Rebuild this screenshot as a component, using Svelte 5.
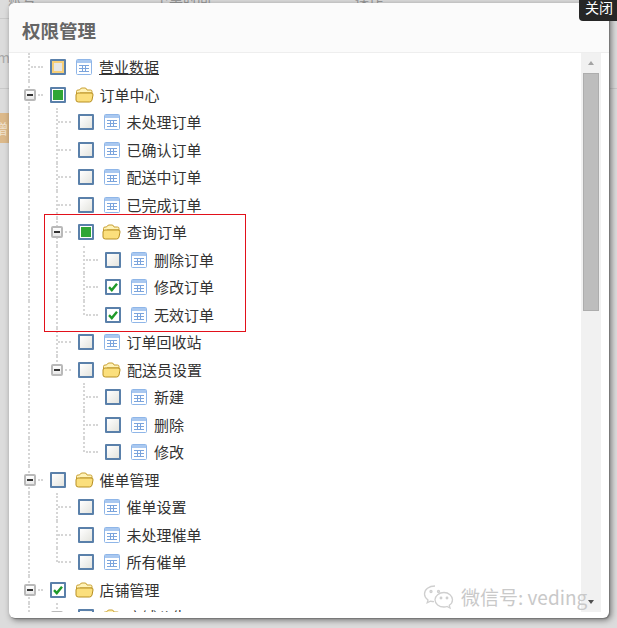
<script>
  const tree = [
    { name: "营业数据", state: "partial", link: true },
    {
      name: "订单中心",
      state: "full",
      children: [
        { name: "未处理订单" },
        { name: "已确认订单" },
        { name: "配送中订单" },
        { name: "已完成订单" },
        {
          name: "查询订单",
          state: "full",
          children: [
            { name: "删除订单" },
            { name: "修改订单", state: "checked" },
            { name: "无效订单", state: "checked" }
          ]
        },
        { name: "订单回收站" },
        {
          name: "配送员设置",
          children: [{ name: "新建" }, { name: "删除" }, { name: "修改" }]
        }
      ]
    },
    {
      name: "催单管理",
      children: [{ name: "催单设置" }, { name: "未处理催单" }, { name: "所有催单" }]
    },
    {
      name: "店铺管理",
      state: "checked",
      children: [{ name: "店铺公告", children: [] }]
    }
  ];

  // flatten the tree, keeping track of which guide lines carry on past each row
  function flatten(nodes, guides = []) {
    const rows = [];
    nodes.forEach((node, i) => {
      const last = guides.length > 0 && i === nodes.length - 1;
      rows.push({ ...node, guides, last });
      if (node.children) {
        rows.push(...flatten(node.children, [...guides, !last]));
      }
    });
    return rows;
  }

  const rows = flatten(tree);
</script>

<div class="page">
  <div class="backdrop">
    <span class="bgHead one">账号</span>
    <span class="bgHead two">下单时间</span>
    <span class="bgHead three">操作</span>
    <span class="bgCut">mi</span>
    <span class="bgButton">增</span>
  </div>

  <div class="modal">
    <div class="header">权限管理</div>
    <div class="body">
      <div class="tree">
        {#each rows as row}
          <div class="row">
            {#each row.guides as carry}
              <span class="cell" class:line={carry}></span>
            {/each}
            <span class="cell line branch" class:end={row.last}>
              {#if row.children}
                <span class="switch"><i></i></span>
              {/if}
            </span>
            <span class="box {row.state || 'empty'}">
              {#if row.state === "checked"}
                <svg width="12" height="12" viewBox="0 0 12 12">
                  <path d="M2 6.2l2.8 2.9L10 2.8" fill="none" stroke="#1f9a2a" stroke-width="2.4" />
                </svg>
              {/if}
            </span>
            {#if row.children}
              <svg class="folder" width="19" height="16" viewBox="0 0 19 16">
                <path d="M1.5 13V4.5Q1.5 3 3 3h1.5Q5.5 1 7 1h3q1.5 0 2 2h3.5q1.500 0 1.500 1.500V6H5z" fill="#fff3b8" stroke="#c9a032" />
                <path d="M1 8q0-2 2-2h13q2.500 0 2 2l-1 5q-.5 2-2.500 2H3.500Q1 15 1 13z" fill="#fbdf7c" stroke="#b78f22" />
              </svg>
            {:else}
              <svg class="doc" width="16" height="16" viewBox="0 0 16 16">
                <rect x=".5" y=".5" width="15" height="15" rx="1" fill="#fff" stroke="#8fb6e8" />
                <rect x="1" y="1" width="14" height="3" fill="#a9c8f0" />
                <path d="M3 6.500h10M3 9.500h10M3 12.500h10M6.500 6v7M9.500 6v7" fill="none" stroke="#7ba4dc" />
              </svg>
            {/if}
            <span class="label" class:link={row.link}>{row.name}</span>
          </div>
        {/each}
        <div class="highlight"></div>
      </div>
      <div class="scrollbar">
        <span class="arrow up"></span>
        <div class="thumb"></div>
        <span class="arrow down"></span>
      </div>
    </div>
    <div class="footer"></div>
  </div>

  <div class="closeTip">关闭</div>

  <div class="watermark">
    <svg width="31" height="26" viewBox="0 0 31 26" fill="none" stroke="#cfcfcf" stroke-width="1.300">
      <path d="M12 2C6 2 1.500 5.500 1.500 10c0 2.500 1.400 4.500 3.500 6l-.8 2.800 3.200-1.600c1.300.4 2.500.5 3.600.5" />
      <path d="M21 8.500c-5 0-9 3.300-9 7.300s4 7.200 9 7.200c1 0 2-.1 3-.5l3 1.500-.7-2.700c2-1.300 3.200-3.300 3.200-5.500 0-4-3.800-7.300-8.500-7.300z" />
      <circle cx="8" cy="7.500" r="1" />
      <circle cx="15.500" cy="7.500" r="1" />
      <circle cx="18" cy="14" r=".8" />
      <circle cx="24" cy="14" r=".8" />
    </svg>
    <span>微信号: veding</span>
  </div>
</div>

<style>
  :global(body) {
    margin: 0;
    background: #dcdcdc;
  }

  .page {
    position: relative;
    box-sizing: border-box;
    width: 617px;
    height: 628px;
    padding: 3px 8px 10px 9px;
    overflow: hidden;
    font-family: "Noto Sans CJK SC", "Liberation Sans", sans-serif;
    background: #dcdcdc;
  }

  .backdrop {
    position: absolute;
    inset: 0;
    color: #999;
    font-size: 14px;
  }

  .backdrop::before {
    content: "";
    position: absolute;
    left: 0;
    right: 0;
    top: 88px;
    border-top: 1px solid #c9c9c9;
  }

  .backdrop::after {
    content: "";
    position: absolute;
    left: 0;
    right: 0;
    top: 18px;
    border-top: 1px solid #c9c9c9;
  }

  .bgHead {
    position: absolute;
    top: -12px;
    line-height: 20px;
  }

  .one { left: 8px; }
  .two { left: 155px; }
  .three { left: 355px; }

  .bgCut {
    position: absolute;
    left: -3px;
    top: 47px;
    font-size: 14px;
    line-height: 20px;
    color: #aaa;
  }

  .bgButton {
    position: absolute;
    left: 0;
    top: 113px;
    width: 9px;
    height: 30px;
    overflow: hidden;
    background: #dcb98a;
    color: #f1e3cf;
    line-height: 30px;
    text-indent: -6px;
  }

  .modal {
    position: relative;
    display: flex;
    flex-direction: column;
    height: 100%;
    overflow: hidden;
    background: #fff;
    border-radius: 6px;
    box-shadow: 1px 1px 1px #777, 2px 2px 6px rgba(0, 0, 0, 0.5);
  }

  .header {
    flex: none;
    box-sizing: border-box;
    height: 50px;
    padding: 12px 13px 0;
    background: #fbfbfb;
    border-bottom: 1px solid #eee;
    color: #666;
    font-size: 18.500px;
    font-weight: 700;
    line-height: 30px;
  }

  .body {
    flex: 1;
    display: flex;
    min-height: 0;
    padding-right: 8px;
  }

  .tree {
    position: relative;
    flex: 1;
    min-width: 0;
    overflow: hidden;
    padding: 0.250px 0 0 6.500px;
  }

  .row {
    display: flex;
    align-items: center;
    height: 27.500px;
  }

  .cell {
    position: relative;
    flex: none;
    align-self: stretch;
    width: 27.500px;
  }

  .line::before {
    content: "";
    position: absolute;
    left: 12.500px;
    top: 0;
    bottom: 0;
    border-left: 2px dotted #d6d6d6;
  }

  .end::before {
    bottom: 50%;
  }

  .branch::after {
    content: "";
    position: absolute;
    left: 15px;
    right: 0;
    top: 50%;
    border-top: 2px dotted #d6d6d6;
    margin-top: -1px;
  }

  .switch {
    position: absolute;
    z-index: 1;
    left: 8px;
    top: 50%;
    box-sizing: border-box;
    width: 12px;
    height: 12px;
    margin-top: -6px;
    display: flex;
    align-items: center;
    justify-content: center;
    background: linear-gradient(#fff, #e8e8e8);
    border: 2px solid #b9b9b9;
    border-radius: 2px;
  }

  .switch i {
    width: 6px;
    height: 2px;
    background: #333;
  }

  .box {
    flex: none;
    box-sizing: border-box;
    display: flex;
    align-items: center;
    justify-content: center;
    width: 16px;
    height: 16px;
    margin-left: 7px;
    border: 2px solid #5a80aa;
    border-radius: 1px;
    background: #fff;
  }

  .empty {
    background: linear-gradient(135deg, #fff, #e4e4de);
  }

  .full {
    background: #2fa635;
    box-shadow: inset 0 0 0 1px #fff;
  }

  .partial {
    background: #e6e6e6;
    box-shadow: inset 0 0 0 2px #f8cf78;
  }

  .doc {
    flex: none;
    margin-left: 10px;
  }

  .folder {
    flex: none;
    margin-left: 8.500px;
    margin-right: -1px;
  }

  .label {
    margin-left: 7px;
    color: #333;
    font-size: 15px;
    line-height: 20px;
    white-space: nowrap;
  }

  .link {
    text-decoration: underline;
  }

  .highlight {
    position: absolute;
    left: 35px;
    top: 161px;
    width: 200px;
    height: 116px;
    border: 1px solid #e2101a;
  }

  .scrollbar {
    flex: none;
    box-sizing: border-box;
    display: flex;
    flex-direction: column;
    width: 20px;
    padding: 20px 2px 0;
    background: #f1f1f1;
    position: relative;
  }

  .thumb {
    height: 238px;
    background: #bdbdbd;
    border: 1px solid #adadad;
    box-sizing: border-box;
  }

  .arrow {
    position: absolute;
    left: 6.500px;
    width: 0;
    height: 0;
    border-left: 3.500px solid transparent;
    border-right: 3.500px solid transparent;
  }

  .up {
    top: 8px;
    border-bottom: 4px solid #a3a3a3;
  }

  .down {
    bottom: 8px;
    border-top: 4px solid #505050;
  }

  .footer {
    flex: none;
    height: 6px;
  }

  .closeTip {
    position: absolute;
    top: 0;
    right: 0;
    box-sizing: border-box;
    width: 38px;
    height: 21px;
    padding-left: 6px;
    background: #262626;
    border-bottom-left-radius: 4px;
    color: #fff;
    font-size: 14px;
    line-height: 14px;
    white-space: nowrap;
    overflow: hidden;
  }

  .watermark {
    position: absolute;
    left: 423px;
    top: 584px;
    display: flex;
    align-items: center;
    gap: 7px;
    color: #c9c9c9;
    font-size: 19px;
    line-height: 26px;
    white-space: nowrap;
  }
</style>
